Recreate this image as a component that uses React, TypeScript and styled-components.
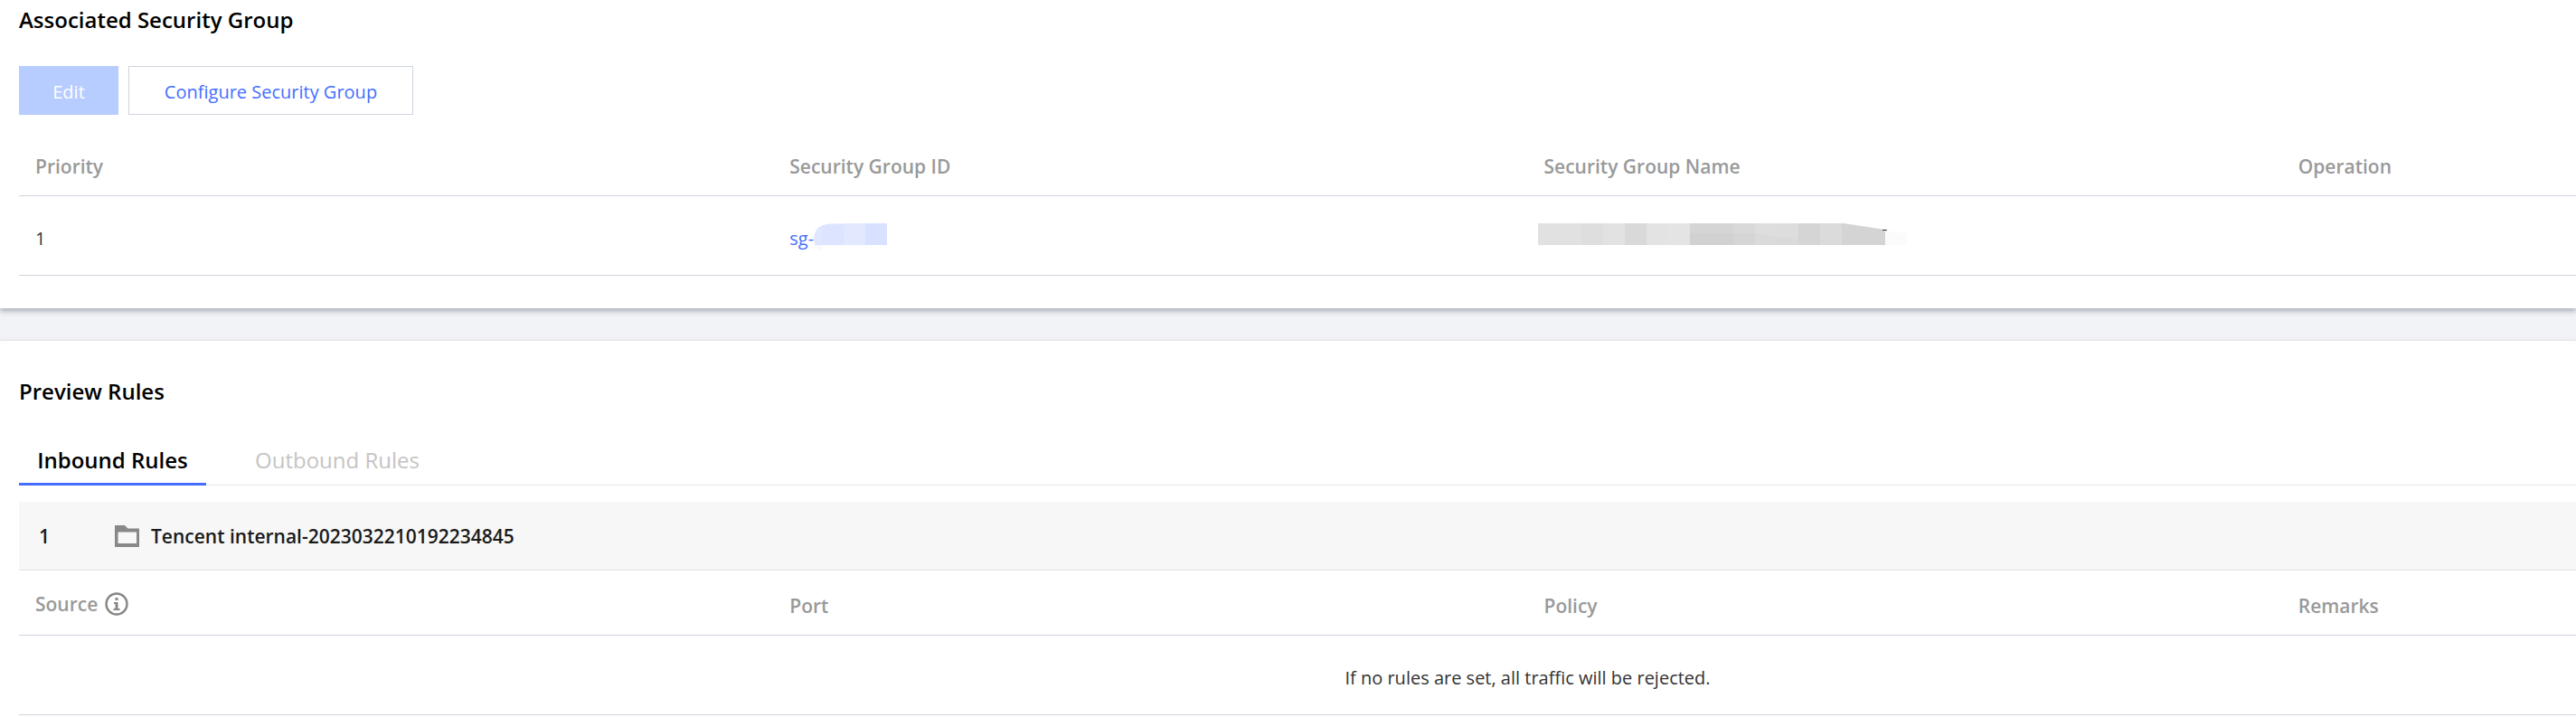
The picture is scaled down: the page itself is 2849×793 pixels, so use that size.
import React, { useState } from "react";
import styled, { createGlobalStyle } from "styled-components";

const GlobalStyle = createGlobalStyle`
  * { box-sizing: border-box; }
  body {
    margin: 0;
    background: #f2f3f7;
    color: #000;
    font-family: "Open Sans", "Noto Sans", sans-serif;
    font-size: 20px;
    line-height: 30px;
  }
  button { font-family: inherit; }
`;

const Page = styled.main`
  display: flex;
  flex-direction: column;
  gap: 36px;
  min-height: 100vh;
`;

const Panel = styled.section`
  padding: 0 0 36px 21px;
  background: #fff;
  box-shadow: 0 3px 6px rgba(54, 58, 80, 0.38);
`;

const PreviewPanel = styled(Panel)`
  flex: 1;
  padding: 34px 0 0 21px;
  box-shadow: 0 0 3px rgba(54, 58, 80, 0.2);
`;

const Heading = styled.h2`
  margin: 0;
  padding: 6px 0 10px;
  font-size: 24px;
  font-weight: 600;
  line-height: 32px;
`;

const Toolbar = styled.div`
  display: flex;
  gap: 11px;
  padding: 25px 0 18px;
`;

const Button = styled.button<{ $primary?: boolean }>`
  height: 54px;
  min-width: ${(p) => (p.$primary ? "110px" : "315px")};
  padding: 2px 24px 0;
  border: 1px solid ${(p) => (p.$primary ? "#b7ccff" : "#cfd5de")};
  border-radius: 0;
  background: ${(p) => (p.$primary ? "#b7ccff" : "#fff")};
  color: ${(p) => (p.$primary ? "#fff" : "#456eff")};
  font-size: 20px;
`;

const TableClip = styled.div`
  overflow-x: clip;
`;

const Table = styled.table`
  width: 118%;
  table-layout: fixed;
  border-collapse: separate;
  border-spacing: 0;
`;

const Th = styled.th`
  width: 25%;
  height: 72px;
  padding: 6px 18px 0;
  border-bottom: 1px solid #cfd5de;
  color: #999;
  font-size: 21px;
  font-weight: 600;
  text-align: left;
`;

const HeadLabel = styled.span`
  display: flex;
  align-items: center;
  gap: 8px;
  padding-bottom: 4px;
`;

const Td = styled.td<{ $center?: boolean }>`
  height: 88px;
  padding: 6px 18px 0;
  border-bottom: 1px solid #cfd5de;
  color: #333;
  font-size: 20px;
  text-align: ${(p) => (p.$center ? "center" : "left")};
`;

const IdLink = styled.a`
  display: flex;
  align-items: center;
  color: #456eff;
  text-decoration: none;
`;

const NameMask = styled.div`
  display: flex;
  margin-left: -7px;
`;

const TabList = styled.div`
  display: flex;
  gap: 36px;
  margin: 24px 0 18px;
  border-bottom: 1px solid #e5e8ed;
`;

const Tab = styled.button<{ $active: boolean }>`
  height: 54px;
  min-width: 207px;
  margin-bottom: -1px;
  padding: 0 18px;
  border: 0;
  border-bottom: 3px solid ${(p) => (p.$active ? "#456eff" : "transparent")};
  background: none;
  color: ${(p) => (p.$active ? "#000" : "#c4c4c4")};
  font-size: 24px;
  font-weight: ${(p) => (p.$active ? 600 : 400)};
`;

const GroupRow = styled.div`
  display: flex;
  align-items: center;
  height: 76px;
  padding: 0 22px;
  border-bottom: 1px solid #e2e3e5;
  background: #f7f7f7;
  color: #1a1a1a;
  font-size: 21px;
  font-weight: 600;
`;

const GroupIndex = styled.span`
  width: 84px;
`;

const GroupName = styled.span`
  padding-left: 13px;
`;

function IdMosaic() {
  return (
    <svg width="82" height="34" viewBox="0 0 82 34" aria-hidden="true">
      <path d="M1 24Q-2 7 9 2.600V24Z" fill="#e0e7ff" />
      <path d="M1 24H9V31Q4 28 1 24Z" fill="#f7f9ff" />
      <path d="M9 2.600Q14 .6 20 .6H33V24H9Z" fill="#dce4ff" />
      <rect x="33" y="0" width="24" height="24" fill="#e2e9ff" />
      <rect x="57" y="0" width="24" height="24" fill="#d8e1ff" />
    </svg>
  );
}

const nameCells = [
  "#e1e1e1", "#e1e1e1", "#dedede", "#e2e2e2", "#d9d9d9", "#e3e3e3", "#e4e4e4", "#d5d5d5",
  "#d5d5d5", "#d9d9d9", "#dedede", "#dddddd", "#d5d5d5", "#dbdbdb", "#d4d4d4", "#d4d4d4",
];

function NameMosaic() {
  return (
    <svg width="408" height="34" viewBox="0 0 408 34" aria-hidden="true">
      {nameCells.map((c, i) => (
        <rect key={i} x={i * 24} y="0" width="24" height="24" fill={c} />
      ))}
      <path d="M168 11H240L288 18V24H168Z" fill="#000" fillOpacity="0.015" />
      <path d="M338 0L384 7V0Z" fill="#fff" />
      <path d="M384 8L408 11V24H384Z" fill="#fbfbfb" />
      <path d="M381 7H386V8H381Z" fill="#333" />
    </svg>
  );
}

function FolderIcon() {
  return (
    <svg width="27" height="26" viewBox="0 0 27 26" aria-hidden="true">
      <path fillRule="evenodd" fill="#888" d="M0 1H11L14.500 4.500H27V25H0ZM3.500 8.500V21H24V8.500Z" />
    </svg>
  );
}

function InfoIcon() {
  return (
    <svg width="26" height="26" viewBox="0 0 26 26" aria-hidden="true">
      <circle cx="13" cy="13" r="11.500" fill="none" stroke="#888" strokeWidth="2.400" />
      <path fill="#888" d="M11.500 6H14.500V9H11.500ZM10 11H14.500V18H16.500V20H9.500V18H11.500V13H10Z" />
    </svg>
  );
}

const tabs = ["Inbound Rules", "Outbound Rules"];

export default function App() {
  const [active, setActive] = useState(tabs[0]);
  return (
    <>
      <GlobalStyle />
      <Page>
        <Panel>
          <Heading>Associated Security Group</Heading>
          <Toolbar>
            <Button $primary disabled>Edit</Button>
            <Button>Configure Security Group</Button>
          </Toolbar>
          <TableClip>
            <Table>
              <thead>
                <tr>
                  <Th>Priority</Th>
                  <Th>Security Group ID</Th>
                  <Th>Security Group Name</Th>
                  <Th>Operation</Th>
                </tr>
              </thead>
              <tbody>
                <tr>
                  <Td>1</Td>
                  <Td>
                    <IdLink href="#group">sg-<IdMosaic /></IdLink>
                  </Td>
                  <Td>
                    <NameMask><NameMosaic /></NameMask>
                  </Td>
                  <Td />
                </tr>
              </tbody>
            </Table>
          </TableClip>
        </Panel>
        <PreviewPanel>
          <Heading>Preview Rules</Heading>
          <TabList role="tablist">
            {tabs.map((t) => (
              <Tab key={t} role="tab" aria-selected={t === active} $active={t === active} onClick={() => setActive(t)}>
                {t}
              </Tab>
            ))}
          </TabList>
          <GroupRow>
            <GroupIndex>1</GroupIndex>
            <FolderIcon />
            <GroupName>Tencent internal-2023032210192234845</GroupName>
          </GroupRow>
          <TableClip>
            <Table>
              <thead>
                <tr>
                  <Th>
                    <HeadLabel>Source<InfoIcon /></HeadLabel>
                  </Th>
                  <Th>Port</Th>
                  <Th>Policy</Th>
                  <Th>Remarks</Th>
                </tr>
              </thead>
              <tbody>
                <tr>
                  <Td colSpan={4} $center>If no rules are set, all traffic will be rejected.</Td>
                </tr>
              </tbody>
            </Table>
          </TableClip>
        </PreviewPanel>
      </Page>
    </>
  );
}
